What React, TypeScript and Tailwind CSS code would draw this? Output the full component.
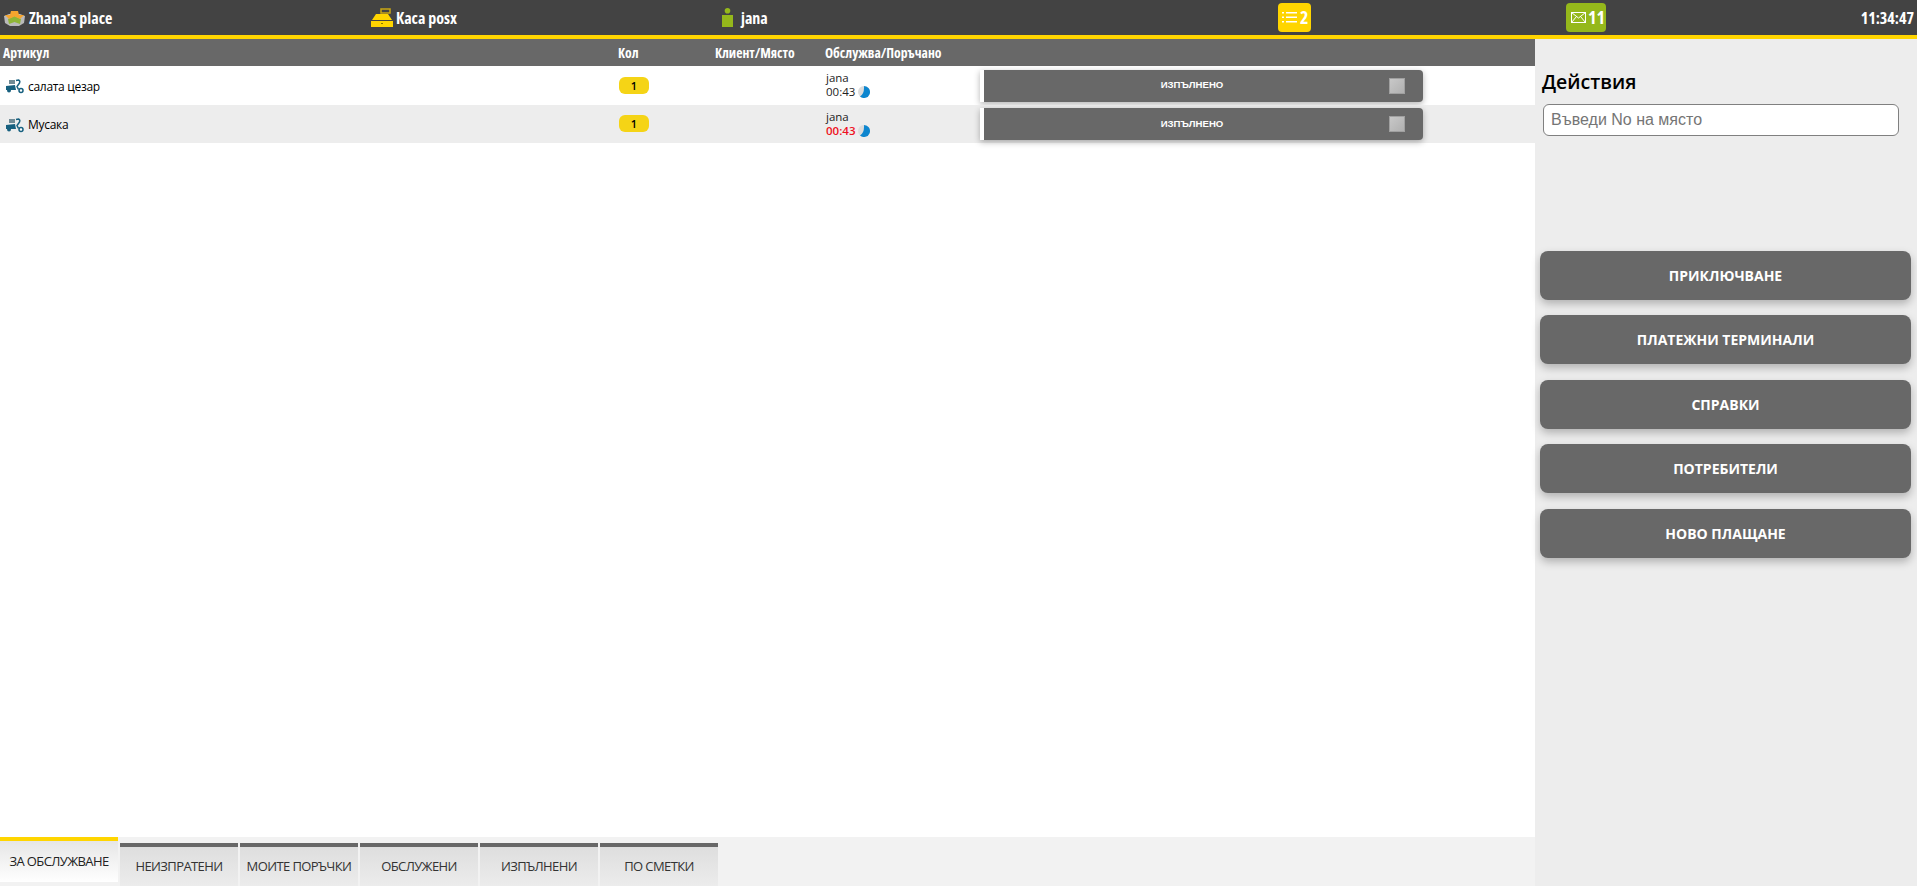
const TABLE_COLS = "grid grid-cols-[618px_97px_110px_155px_1fr]";

const ORDERS = [
  { name: "салата цезар", late: false, rowClass: "bg-white h-[39px]", infoClass: "pb-[2px]" },
  { name: "Мусака", late: true, rowClass: "bg-[#ededed] h-[38px]", infoClass: "" },
];

const TABS = ["НЕИЗПРАТЕНИ", "МОИТЕ ПОРЪЧКИ", "ОБСЛУЖЕНИ", "ИЗПЪЛНЕНИ", "ПО СМЕТКИ"];

const ACTIONS = ["ПРИКЛЮЧВАНЕ", "ПЛАТЕЖНИ ТЕРМИНАЛИ", "СПРАВКИ", "ПОТРЕБИТЕЛИ", "НОВО ПЛАЩАНЕ"];

function PlaceIcon() {
  return (
    <svg width="21" height="18" viewBox="0 0 21 18" className="shrink-0">
      <path d="M0 7 L5 5 L16 5 L21 7 L20 14 L15 17 L6 17 L1 14 Z" fill="#b9b9b9" />
      <path d="M4 10 L10.5 7 L17 10 L16 15 L10.5 13 L5 15 Z" fill="#8fb636" />
      <path d="M1 6 L6 6 L7 2 L14 2 L15 6 L20 6 L16 10 L10.5 7.5 L5 10 Z" fill="#f5a52e" />
    </svg>
  );
}

function RegisterIcon() {
  return (
    <svg width="22" height="20" viewBox="0 0 22 20" className="shrink-0">
      <rect x="10" y="1" width="9" height="4" fill="none" stroke="#c9a615" strokeWidth="1.5" />
      <path d="M5 6 L17 6 L21 12 L1 12 Z" fill="#ffd500" />
      <rect x="0" y="13" width="22" height="6" fill="#ffd500" />
      <rect x="10" y="15" width="2" height="1" fill="#8a7400" />
    </svg>
  );
}

function PersonIcon() {
  return (
    <svg width="11" height="19" viewBox="0 0 11 19" className="shrink-0">
      <circle cx="5.5" cy="2.8" r="2.8" fill="#95b81b" />
      <rect x="0" y="7" width="11" height="12" fill="#95b81b" />
    </svg>
  );
}

function ListIcon() {
  return (
    <svg width="16" height="13" viewBox="0 0 16 13" className="shrink-0">
      <g fill="#fff">
        <rect x="0" y="1" width="2" height="1.5" />
        <rect x="0" y="5.5" width="2" height="1.5" />
        <rect x="0" y="10" width="2" height="1.5" />
        <rect x="4" y="1" width="11" height="1.5" />
        <rect x="4" y="5.5" width="11" height="1.5" />
        <rect x="4" y="10" width="11" height="1.5" />
      </g>
    </svg>
  );
}

function MailIcon() {
  return (
    <svg width="15" height="11" viewBox="0 0 15 11" className="shrink-0">
      <g fill="none" stroke="#fff" strokeWidth="1">
        <rect x="0.5" y="0.5" width="14" height="10" />
        <path d="M0.5 0.5 L7.5 6 L14.5 0.5 M0.5 10.5 L5.5 4.5 M14.5 10.5 L9.5 4.5" />
      </g>
    </svg>
  );
}

function ScooterIcon() {
  return (
    <svg width="19" height="15" viewBox="0 0 19 15" className="shrink-0">
      <rect x="4" y="1" width="6" height="4" fill="#6f8a95" />
      <path d="M1 7 L10 6 L11 11 L1 11 Z" fill="#17607f" />
      <circle cx="4" cy="11.5" r="2" fill="#17607f" />
      <path d="M11 1.5 L13.5 1 Q15.5 2 14.5 4 L12 7.5 L13.5 10.5" fill="none" stroke="#17607f" strokeWidth="1.5" />
      <circle cx="16" cy="11.5" r="2" fill="#fff" stroke="#17607f" strokeWidth="1.5" />
    </svg>
  );
}

function TimerIcon() {
  return (
    <svg width="12" height="12" viewBox="0 0 12 12" className="shrink-0">
      <circle cx="6" cy="6" r="6" fill="#dcdcdc" />
      <path d="M6 0 A6 6 0 1 1 2 10.5 Q6.5 8 6 0 Z" fill="#0d86cf" />
    </svg>
  );
}

export default function App() {
  return (
    <div className="h-[886px] w-full overflow-hidden bg-white flex flex-col font-['Open_Sans',sans-serif]">
      <header className="h-[39px] shrink-0 bg-[#434343] border-b-4 border-[#ffd500] text-white font-bold text-[16px] [font-stretch:75%] grid grid-cols-[370px_350px_558px_288px_1fr_auto] items-center">
        <div className="flex items-center gap-1 pl-1">
          <PlaceIcon />
          <span>Zhana's place</span>
        </div>
        <div className="flex items-center gap-[3px] pl-[1px]">
          <RegisterIcon />
          <span>Каса posx</span>
        </div>
        <div className="flex items-center gap-2 pl-[2px]">
          <PersonIcon />
          <span>jana</span>
        </div>
        <div className="w-[33px] h-[29px] bg-[#ffd500] rounded flex items-center gap-[2px] pl-1 text-[18px]">
          <ListIcon />
          <span>2</span>
        </div>
        <div className="w-[40px] h-[29px] bg-[#95b81b] rounded flex items-center gap-[2px] pl-[5px] text-[18px]">
          <MailIcon />
          <span>11</span>
        </div>
        <div className="pr-[3px]">11:34:47</div>
      </header>

      <div className="flex-1 flex min-h-0">
        <main className="w-[1535px] shrink-0 flex flex-col">
          <div className={`${TABLE_COLS} h-[27px] pt-[1px] items-center bg-[#686868] text-white font-bold text-[13.7px] [font-stretch:75%]`}>
            <div className="pl-[3px]">Артикул</div>
            <div>Кол</div>
            <div>Клиент/Място</div>
            <div>Обслужва/Поръчано</div>
            <div />
          </div>

          {ORDERS.map((order) => (
            <div key={order.name} className={`${TABLE_COLS} ${order.rowClass} items-center text-black`}>
              <div className="flex items-center gap-[4px] pl-[5px] pt-[2px] text-[12px] font-medium tracking-[-0.3px]">
                <ScooterIcon />
                <span>{order.name}</span>
              </div>
              <div>
                <span className="block w-[30px] h-[17px] ml-[1px] mb-[1px] rounded-md bg-[#f5d416] text-[11px] font-semibold leading-[17px] text-center">
                  1
                </span>
              </div>
              <div />
              <div className={`pl-[1px] text-[11.5px] leading-[14px] text-[#222222] ${order.infoClass}`}>
                <div>jana</div>
                <div className="flex items-center gap-[3px]">
                  <span className={order.late ? "text-[#ee1122] font-semibold" : ""}>00:43</span>
                  <TimerIcon />
                </div>
              </div>
              <div>
                <div className="w-[443px] h-[32px] border-l-4 border-white bg-[#686868] rounded-r flex items-center shadow-[0_2px_6px_rgba(0,0,0,0.3)]">
                  <span className="flex-1 text-center pl-[11px] text-white text-[9.6px] font-bold font-['Liberation_Sans',sans-serif]">
                    ИЗПЪЛНЕНО
                  </span>
                  <span className="w-[16px] h-[16px] mr-[18px] bg-gradient-to-br from-[#c8c8c8] to-[#b0b0b0] border border-[#a0a0a0]" />
                </div>
              </div>
            </div>
          ))}

          <div className="flex-1" />

          <nav className="h-[49px] shrink-0 bg-[#f2f2f2] flex items-start">
            <div className="w-[118px] h-[45px] border-t-4 border-[#ffd500] bg-gradient-to-b from-[#e6e6e6] to-white text-[#222222] text-[13px] font-medium tracking-[-0.6px] flex items-center justify-center">
              ЗА ОБСЛУЖВАНЕ
            </div>
            {TABS.map((tab) => (
              <div
                key={tab}
                className="w-[118px] h-[43px] mt-[6px] ml-[2px] first:ml-[1px] border-t-4 border-[#686868] bg-gradient-to-b from-[#dedede] to-[#ececec] text-[#333333] text-[13px] font-medium tracking-[-0.6px] flex items-center justify-center"
              >
                {tab}
              </div>
            ))}
          </nav>
        </main>

        <aside className="flex-1 bg-[#ededed] pl-[5px] pr-[6px]">
          <h2 className="mt-[29px] pl-[2px] text-[19.5px] leading-[27px] font-semibold text-black">Действия</h2>
          <input
            placeholder="Въведи No на място"
            className="block mt-[9px] ml-[3px] w-[356px] h-[32px] px-[7px] bg-white border border-[#808080] rounded-md text-[16px] font-['Liberation_Sans',sans-serif] outline-none placeholder:text-[#757575]"
          />
          <div className="mt-[115px] flex flex-col gap-[15.4px]">
            {ACTIONS.map((action) => (
              <button
                key={action}
                className="h-[49px] w-full bg-[#686868] rounded-lg text-white text-[14px] font-bold shadow-[0_4px_8px_rgba(0,0,0,0.25)]"
              >
                {action}
              </button>
            ))}
          </div>
        </aside>
      </div>
    </div>
  );
}
